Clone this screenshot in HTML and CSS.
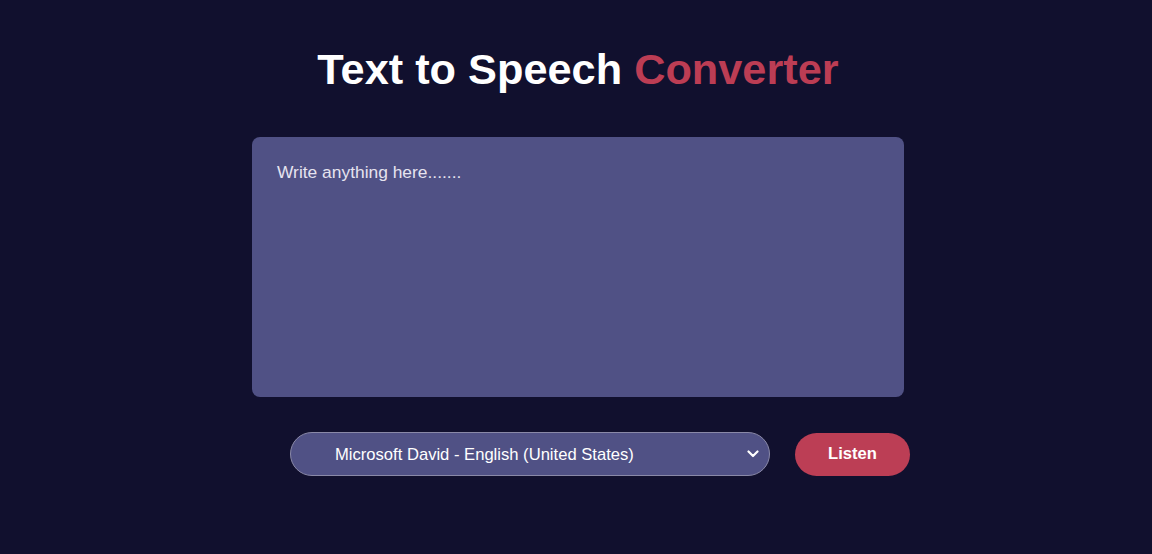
FILE: index.html
```html
<!DOCTYPE html>
<html lang="en">
<head>
<meta charset="utf-8">
<title>Text to Speech Converter</title>
<link rel="stylesheet" href="styles.css">
</head>
<body>
<main class="page">
  <h1 class="title">Text to Speech <span class="accent">Converter</span></h1>
  <div class="panel">
    <textarea class="input" placeholder="Write anything here......."></textarea>
    <div class="controls">
      <div class="select-wrap">
        <select class="voice">
          <option>Microsoft David - English (United States)</option>
        </select>
        <svg class="chevron" width="12" height="8" viewBox="0 0 12 8" aria-hidden="true">
          <path d="M1.5 1.5 L6 6 L10.5 1.5" fill="none" stroke="#ffffff" stroke-width="2.2" stroke-linecap="round" stroke-linejoin="round"/>
        </svg>
      </div>
      <button class="listen">Listen</button>
    </div>
  </div>
</main>
</body>
</html>
```
FILE: styles.css
```css
* { box-sizing: border-box; }
html, body { margin: 0; padding: 0; }
body {
  background: #11102e;
  font-family: "Liberation Sans", Arial, sans-serif;
  color: #fff;
  min-height: 554px;
}
.page {
  display: flex;
  flex-direction: column;
  align-items: center;
  padding-top: 43px;
  padding-left: 4px;
}
.title {
  margin: 0;
  font-size: 43.3px;
  font-weight: 700;
  line-height: 52px;
  color: #fff;
}
.accent { color: #bc3d54; }
.panel {
  width: 652px;
  margin-top: 42px;
  display: flex;
  flex-direction: column;
}
.input {
  width: 652px;
  height: 260px;
  resize: none;
  border: none;
  outline: none;
  border-radius: 8px;
  background: #505185;
  color: #fff;
  padding: 25px 25px;
  font-family: "Liberation Sans", Arial, sans-serif;
  font-size: 17.4px;
  line-height: 20px;
  display: block;
}
.input::placeholder { color: #e6e3ef; opacity: 1; }
.controls {
  display: flex;
  align-items: center;
  gap: 25px;
  margin-top: 35px;
  padding-left: 38px;
}
.select-wrap {
  position: relative;
  width: 480px;
  height: 44px;
  flex: none;
}
.voice {
  appearance: none;
  -webkit-appearance: none;
  width: 100%;
  height: 100%;
  border: 1px solid #8a89a8;
  border-radius: 22px;
  background: #505185;
  color: #fff;
  font-family: "Liberation Sans", Arial, sans-serif;
  font-size: 16.6px;
  padding: 0 40px 0 44px;
  outline: none;
}
.chevron {
  position: absolute;
  right: 11px;
  top: 18px;
}
.listen {
  width: 115px;
  height: 43px;
  border: none;
  border-radius: 22px;
  background: #bc3e55;
  color: #fff;
  font-family: "Liberation Sans", Arial, sans-serif;
  font-size: 16.6px;
  font-weight: 700;
  flex: none;
}
```
